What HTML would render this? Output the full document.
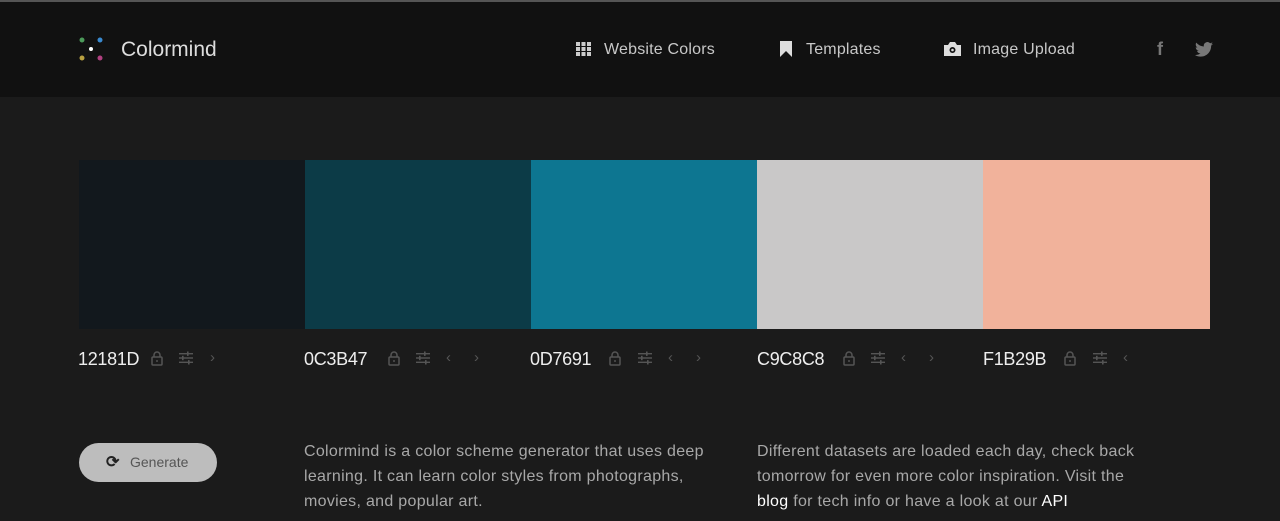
<!DOCTYPE html>
<html><head><style>
body{margin:0;width:1280px;height:521px;overflow:hidden;background:#1b1b1b;font-family:"Liberation Sans",sans-serif;position:relative}
.hdr{position:absolute;left:0;top:0;width:1280px;height:97px;background:#111;border-top:2px solid #555;box-sizing:border-box}
.a{position:absolute}
.nav{color:#c8c8c8;font-size:16px;top:41px;letter-spacing:0.2px}
.sw{position:absolute;top:160px;height:169px;width:226px}
.hex{position:absolute;top:349px;color:#eee;font-size:18px;letter-spacing:-0.3px}
.ic{position:absolute;top:351px}
.ch{position:absolute;top:349px;color:#555;font-size:15px}
p{position:absolute;margin:0;color:#a8a8a8;font-size:16px;line-height:25px;letter-spacing:0.3px}
b{color:#fff;font-weight:normal}
</style></head><body>
<div class="hdr"></div>
<svg class="a" style="left:76px;top:35px" width="30" height="30">
<circle cx="6" cy="5" r="2.5" fill="#4c9a5a"/><circle cx="24" cy="5" r="2.5" fill="#3a8ad0"/><circle cx="15" cy="14" r="2" fill="#fff"/><circle cx="6" cy="23" r="2.5" fill="#b8a040"/><circle cx="24" cy="23" r="2.5" fill="#b04080"/></svg>
<div class="a" style="left:121px;top:38px;color:#ddd;font-size:21px">Colormind</div>
<svg class="a" style="left:576px;top:42px" width="15" height="14" fill="#ccc"><rect x="0" y="0" width="4" height="4"/><rect x="5.5" y="0" width="4" height="4"/><rect x="11" y="0" width="4" height="4"/><rect x="0" y="5" width="4" height="4"/><rect x="5.5" y="5" width="4" height="4"/><rect x="11" y="5" width="4" height="4"/><rect x="0" y="10" width="4" height="4"/><rect x="5.5" y="10" width="4" height="4"/><rect x="11" y="10" width="4" height="4"/></svg>
<div class="a nav" style="left:604px">Website Colors</div>
<svg class="a" style="left:780px;top:41px" width="12" height="16" fill="#ddd"><path d="M0 0H12V16L6 10L0 16Z"/></svg>
<div class="a nav" style="left:806px">Templates</div>
<svg class="a" style="left:944px;top:42px" width="17" height="14"><path d="M0 3H4L6 0H11L13 3H17V14H0Z" fill="#ddd"/><circle cx="8.5" cy="8" r="3" fill="#111"/><circle cx="8.5" cy="8" r="1.3" fill="#ddd"/></svg>
<div class="a nav" style="left:973px">Image Upload</div>
<div class="a" style="left:1157px;top:39px;color:#777;font-size:18px;font-weight:bold">f</div>
<svg class="a" style="left:1195px;top:42px" width="18" height="15" viewBox="0 0 24 20"><path fill="#777" d="M24 2.4a10 10 0 0 1-2.8.8A5 5 0 0 0 23.3.5a10 10 0 0 1-3.1 1.2A4.9 4.9 0 0 0 11.8 6 14 14 0 0 1 1.7.9a4.9 4.9 0 0 0 1.5 6.6A4.9 4.9 0 0 1 1 6.9a4.9 4.9 0 0 0 3.9 4.8 4.9 4.9 0 0 1-2.2.1 4.9 4.9 0 0 0 4.6 3.4A9.9 9.9 0 0 1 0 17.3 14 14 0 0 0 7.5 19.5c9 0 14-7.5 14-14v-.6A10 10 0 0 0 24 2.4z"/></svg>
<div class="sw" style="left:79px;background:#12181D"></div>
<div class="sw" style="left:305px;background:#0C3B47"></div>
<div class="sw" style="left:531px;background:#0D7691"></div>
<div class="sw" style="left:757px;background:#C9C8C8"></div>
<div class="sw" style="left:983px;width:227px;background:#F1B29B"></div>

<svg width="0" height="0" style="position:absolute"><defs>
<g id="lk"><path d="M3 6V4a3 3 0 0 1 6 0V6" fill="none" stroke="#555" stroke-width="1.5"/><rect x="1" y="6" width="10" height="8" rx="1" fill="none" stroke="#555" stroke-width="1.5"/><rect x="5.3" y="9" width="1.4" height="2" fill="#555"/></g>
<g id="sl" fill="#555"><rect x="0" y="2" width="14" height="1.4"/><rect x="0" y="6.3" width="14" height="1.4"/><rect x="0" y="10.6" width="14" height="1.4"/><rect x="8" y="0.5" width="1.6" height="4.4"/><rect x="3" y="4.8" width="1.6" height="4.4"/><rect x="9" y="9.1" width="1.6" height="4.4"/></g>
</defs></svg>

<div class="hex" style="left:78px">12181D</div><svg class="ic" style="left:151px" width="12" height="15"><use href="#lk"/></svg><svg class="ic" style="left:179px" width="14" height="14"><use href="#sl"/></svg><div class="ch" style="left:210px">›</div>
<div class="hex" style="left:304px">0C3B47</div><svg class="ic" style="left:388px" width="12" height="15"><use href="#lk"/></svg><svg class="ic" style="left:416px" width="14" height="14"><use href="#sl"/></svg><div class="ch" style="left:446px">‹</div><div class="ch" style="left:474px">›</div>
<div class="hex" style="left:530px">0D7691</div><svg class="ic" style="left:609px" width="12" height="15"><use href="#lk"/></svg><svg class="ic" style="left:638px" width="14" height="14"><use href="#sl"/></svg><div class="ch" style="left:668px">‹</div><div class="ch" style="left:696px">›</div>
<div class="hex" style="left:757px">C9C8C8</div><svg class="ic" style="left:843px" width="12" height="15"><use href="#lk"/></svg><svg class="ic" style="left:871px" width="14" height="14"><use href="#sl"/></svg><div class="ch" style="left:901px">‹</div><div class="ch" style="left:929px">›</div>
<div class="hex" style="left:983px">F1B29B</div><svg class="ic" style="left:1064px" width="12" height="15"><use href="#lk"/></svg><svg class="ic" style="left:1093px" width="14" height="14"><use href="#sl"/></svg><div class="ch" style="left:1123px">‹</div>
<div class="a" style="left:79px;top:443px;width:138px;height:39px;border-radius:20px;background:#bdbdbd"></div>
<div class="a" style="left:106px;top:452px;color:#222;font-size:16px;font-weight:bold">⟳</div>
<div class="a" style="left:130px;top:454px;color:#555;font-size:14px">Generate</div>
<p style="left:304px;top:439px;width:420px">Colormind is a color scheme generator that uses deep learning. It can learn color styles from photographs, movies, and popular art.</p>
<p style="left:757px;top:439px;width:385px">Different datasets are loaded each day, check back tomorrow for even more color inspiration. Visit the <b>blog</b> for tech info or have a look at our <b>API</b></p>
</body></html>
